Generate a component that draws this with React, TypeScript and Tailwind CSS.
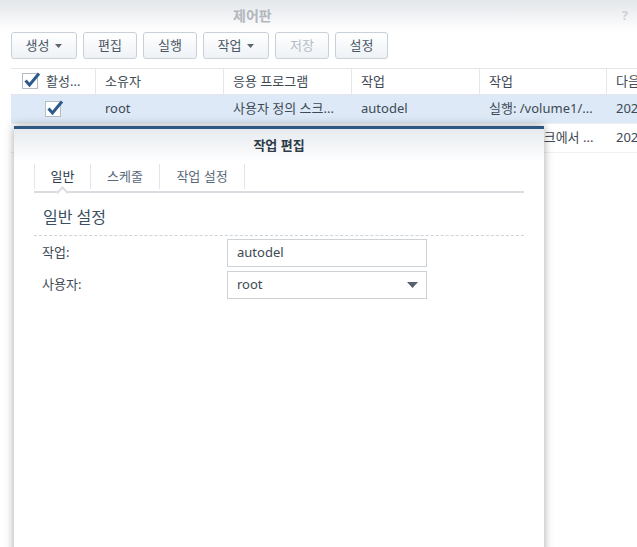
import { ReactNode } from 'react';

const FONT = '"Noto Sans", "Noto Sans CJK KR", sans-serif';

const CheckBox = () => (
  <svg width="20" height="20" viewBox="0 0 20 20">
    <rect x="0.5" y="3.5" width="15" height="15" fill="#fff" stroke="#b4bcc4" />
    <path d="M3.5 10.5 L7.5 15 L17 3.5" fill="none" stroke="#2d5a8c" strokeWidth="3" strokeLinejoin="miter" />
  </svg>
);

const Caret = () => (
  <svg width="7" height="4" viewBox="0 0 7 4" className="ml-[6px]">
    <path d="M0 0 L7 0 L3.5 4 Z" fill="#5b6670" />
  </svg>
);

const ToolButton = ({ children, caret, disabled, w }: { children: ReactNode; caret?: boolean; disabled?: boolean; w: string }) => (
  <button
    type="button"
    className={`${w} h-[27px] flex items-center justify-center rounded-[3px] border border-[#c8d0d8] bg-gradient-to-b from-white to-[#eef2f6] text-[13px] ${
      disabled ? 'text-[#b3bcc5]' : 'text-[#4a5664]'
    }`}
  >
    {children}
    {caret && <Caret />}
  </button>
);

const columns = [
  { label: '소유자', w: 'w-[128px]' },
  { label: '응용 프로그램', w: 'w-[128px]' },
  { label: '작업', w: 'w-[128px]' },
  { label: '작업', w: 'w-[127px]' },
  { label: '다음', w: 'w-[60px]' },
];

const rows = [
  { owner: 'root', app: '사용자 정의 스크...', name: 'autodel', task: '실행: /volume1/...', next: '202', selected: true },
  { owner: '', app: '', name: '', task: '실행: 디스크에서 ...', next: '202', selected: false },
];

const App = () => {
  return (
    <div className="relative w-[637px] h-[547px] overflow-hidden bg-white" style={{ fontFamily: FONT }}>
      {/* window title */}
      <div className="h-[31px] flex items-center bg-gradient-to-b from-[#e3e6ea] to-white">
        <span className="pl-[233px] text-[14px] font-bold text-[#b2b8be]">제어판</span>
        <span className="ml-auto mr-[9px] text-[13px] font-bold text-[#cdd2d6]">?</span>
      </div>

      {/* toolbar */}
      <div className="flex gap-[6px] px-[11px] pt-[1px]">
        <ToolButton caret w="w-[66px]">생성</ToolButton>
        <ToolButton w="w-[54px]">편집</ToolButton>
        <ToolButton w="w-[54px]">실행</ToolButton>
        <ToolButton caret w="w-[66px]">작업</ToolButton>
        <ToolButton disabled w="w-[54px]">저장</ToolButton>
        <ToolButton w="w-[53px]">설정</ToolButton>
      </div>

      {/* table */}
      <div className="ml-[11px] mt-[9px] text-[13px] text-[#3e4955]">
        <div className="flex h-[27px] border-t border-b border-[#e3e7eb]">
          <div className="w-[85px] shrink-0 flex items-center pl-[11px] border-r border-[#e3e7eb]">
            <span className="-mt-[3px]"><CheckBox /></span>
            <span className="ml-[4px]">활성...</span>
          </div>
          {columns.map((c, i) => (
            <div key={i} className={`${c.w} shrink-0 flex items-center pl-[9px] whitespace-nowrap overflow-hidden ${i < columns.length - 1 ? 'border-r border-[#e3e7eb]' : ''}`}>
              {c.label}
            </div>
          ))}
        </div>
        {rows.map((r, i) => (
          <div key={i} className={`flex h-[29px] border-b border-[#eef0f3] ${r.selected ? 'bg-[#dde9f6]' : 'bg-white'}`}>
            <div className="w-[85px] shrink-0 flex items-center justify-center">
              {r.selected && <span className="-mt-[3px] ml-[3px]"><CheckBox /></span>}
            </div>
            <div className="w-[128px] shrink-0 flex items-center pl-[9px]">{r.owner}</div>
            <div className="w-[128px] shrink-0 flex items-center pl-[9px] whitespace-nowrap">{r.app}</div>
            <div className="w-[128px] shrink-0 flex items-center pl-[9px]">{r.name}</div>
            <div className="w-[127px] shrink-0 flex items-center pl-[9px] whitespace-nowrap">{r.task}</div>
            <div className="w-[60px] shrink-0 flex items-center pl-[9px]">{r.next}</div>
          </div>
        ))}
      </div>

      {/* edit dialog */}
      <div className="absolute left-[14px] top-[126px] w-[530px] h-[440px] bg-white border-t-[3px] border-[#2d5783] shadow-[0_0_9px_rgba(0,0,0,0.35)]">
        <div className="h-[33px] flex items-center justify-center bg-gradient-to-b from-[#e6eaef] to-white">
          <span className="text-[13px] font-bold text-[#2e3b48]">작업 편집</span>
        </div>

        <div className="px-[20px]">
          {/* tabs */}
          <div className="relative flex h-[31px] border-b-2 border-[#d9dde2] text-[13px]">
            <div className="w-[57px] flex items-center justify-center border-l border-r border-[#e2e6ea] my-[2px] text-[#2c3b4b]">일반</div>
            <div className="w-[69px] flex items-center justify-center border-r border-[#e2e6ea] my-[2px] text-[#5a6978]">스케줄</div>
            <div className="w-[85px] flex items-center justify-center border-r border-[#e2e6ea] my-[2px] text-[#5a6978]">작업 설정</div>
            <div className="absolute left-[24px] -bottom-[6px] w-[9px] h-[9px] rotate-45 bg-white border-l-2 border-t-2 border-[#d9dde2]" />
          </div>

          {/* section */}
          <div className="mt-[12px] pl-[9px] pb-[6px] border-b border-dashed border-[#cfd4d9] text-[16px] text-[#3c4e62]">일반 설정</div>

          <div className="mt-[3px] text-[13px] text-[#3e4955]">
            <div className="flex items-center h-[28px]">
              <span className="w-[193px] pl-[8px]">작업:</span>
              <div className="w-[200px] h-[28px] flex items-center px-[9px] border border-[#cdd2d7]">autodel</div>
            </div>
            <div className="flex items-center h-[28px] mt-[4px]">
              <span className="w-[193px] pl-[8px]">사용자:</span>
              <div className="w-[200px] h-[28px] flex items-center px-[9px] border border-[#cdd2d7]">
                <span>root</span>
                <svg width="11" height="6" viewBox="0 0 11 6" className="ml-auto mr-[-1px]">
                  <path d="M0 0 L11 0 L5.5 6 Z" fill="#58616b" />
                </svg>
              </div>
            </div>
          </div>
        </div>
      </div>
    </div>
  );
};

export default App;
